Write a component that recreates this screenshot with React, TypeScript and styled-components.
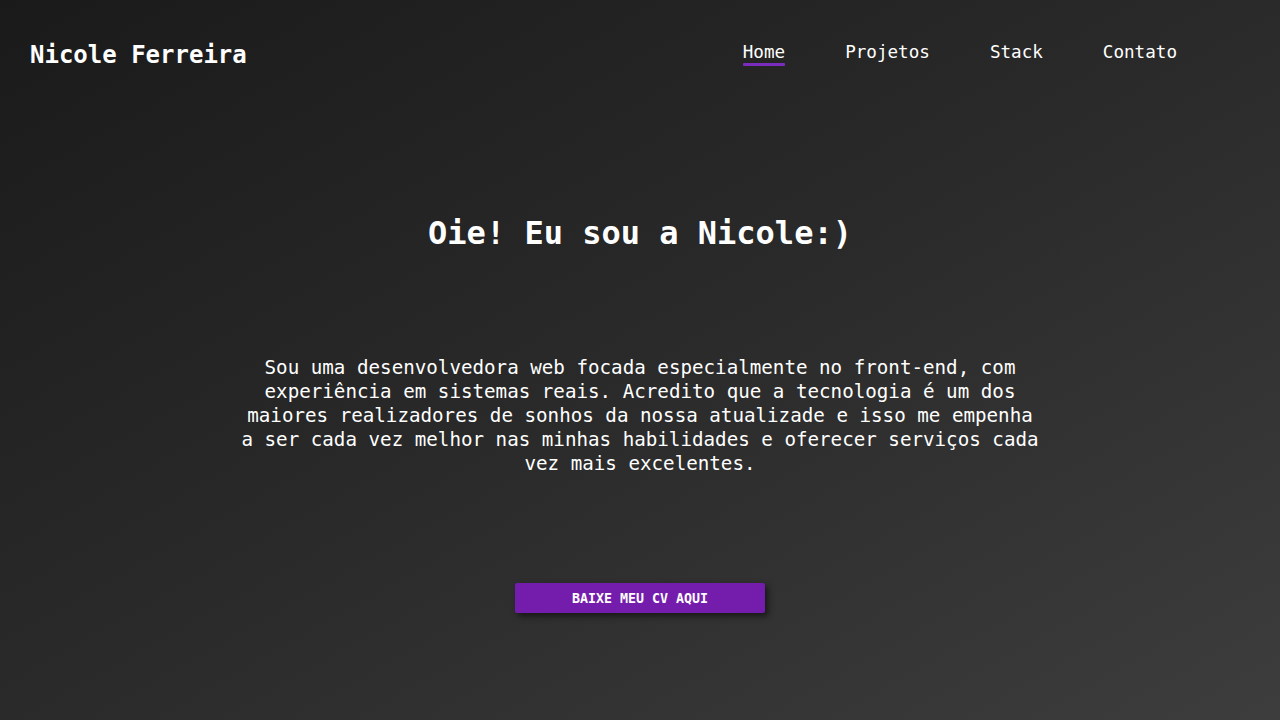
import React from "react";
import styled, { createGlobalStyle } from "styled-components";

const GlobalStyle = createGlobalStyle`
  * { box-sizing: border-box; }
  html, body { margin: 0; padding: 0; }
  body {
    font-family: "DejaVu Sans Mono", "Liberation Mono", monospace;
    color: #ffffff;
    background: #1b1b1b;
  }
`;

const Page = styled.div`
  min-height: 720px;
  width: 100%;
  background: linear-gradient(to bottom right, #1a1a1a 0%, #2a2a2a 50%, #3d3d3d 100%);
  display: flex;
  flex-direction: column;
`;

const Header = styled.header`
  display: flex;
  justify-content: space-between;
  align-items: flex-start;
  padding: 40px 103px 0 30px;
  height: 68px;
`;

const Logo = styled.div`
  margin-top: 1px;
  font-size: 24px;
  font-weight: 700;
  line-height: 28px;
  color: #ffffff;
`;

const Nav = styled.nav`
  display: flex;
  gap: 60px;
`;

const NavLink = styled.a<{ $active?: boolean }>`
  position: relative;
  font-size: 17.6px;
  line-height: 24px;
  color: #ffffff;
  text-decoration: none;
  &::after {
    content: "";
    display: ${(p) => (p.$active ? "block" : "none")};
    position: absolute;
    left: 0;
    right: 0;
    top: 23px;
    height: 3px;
    background: #7a2cbf;
    border-radius: 1px;
  }
`;

const Hero = styled.main`
  display: flex;
  flex-direction: column;
  align-items: center;
  padding-top: 145px;
`;

const Title = styled.h1`
  margin: 0;
  font-size: 32px;
  line-height: 40px;
  font-weight: 700;
  color: #ffffff;
`;

const Intro = styled.p`
  margin: 103px 0 0;
  font-size: 19.2px;
  line-height: 24px;
  text-align: center;
  width: 69.5ch;
  color: #ffffff;
`;

const CvButton = styled.button`
  margin-top: 107px;
  width: 250px;
  height: 30px;
  border: none;
  border-radius: 2px;
  background: #741cac;
  color: #ffffff;
  font-family: "DejaVu Sans Mono", "Liberation Mono", monospace;
  font-weight: 700;
  font-size: 13.3px;
  text-transform: uppercase;
  box-shadow: 3px 3px 6px rgba(0, 0, 0, 0.55);
  cursor: pointer;
`;

export default function App() {
  return (
    <>
      <GlobalStyle />
      <Page>
        <Header>
          <Logo>Nicole Ferreira</Logo>
          <Nav>
            <NavLink href="#" $active>Home</NavLink>
            <NavLink href="#">Projetos</NavLink>
            <NavLink href="#">Stack</NavLink>
            <NavLink href="#">Contato</NavLink>
          </Nav>
        </Header>
        <Hero>
          <Title>Oie! Eu sou a Nicole:)</Title>
          <Intro>
            Sou uma desenvolvedora web focada especialmente no front-end, com
            experiência em sistemas reais. Acredito que a tecnologia é um dos
            maiores realizadores de sonhos da nossa atualizade e isso me empenha
            a ser cada vez melhor nas minhas habilidades e oferecer serviços cada
            vez mais excelentes.
          </Intro>
          <CvButton>Baixe meu CV aqui</CvButton>
        </Hero>
      </Page>
    </>
  );
}
